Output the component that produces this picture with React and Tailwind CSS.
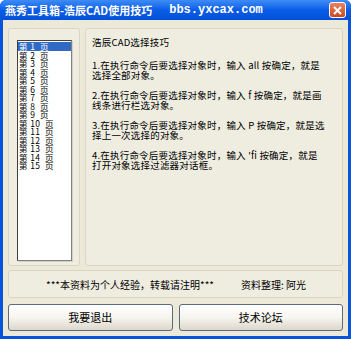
import React, { useState } from "react";

const cjk = "font-['Noto_Sans_CJK_SC',sans-serif]";

const pages = Array.from({ length: 15 }, (_, i) => i + 1);

const tips = [
  ["1.在执行命令后要选择对象时，输入 all 按确定，就是", "选择全部对象。"],
  ["2.在执行命令后要选择对象时，输入 f 按确定，就是画", "线条进行栏选对象。"],
  ["3.在执行命令后要选择对象时，输入 P 按确定，就是选", "择上一次选择的对象。"],
  ["4.在执行命令后要选择对象时，输入 'fi 按确定，就是", "打开对象选择过滤器对话框。"],
];

export default function App() {
  const [page, setPage] = useState(1);

  return (
    <div className="w-[351px] h-[339px] flex flex-col bg-[#0855DD] rounded-t-[6px] overflow-hidden">
      {/* title bar */}
      <div className="h-[22px] flex items-center px-[5px] bg-gradient-to-b from-[#3D8CF5] via-[#0A5CE8] to-[#0550D8]">
        <span className={`${cjk} text-white text-[11px] font-bold`}>
          燕秀工具箱-浩辰CAD使用技巧
        </span>
        <span className="ml-[17px] font-['Liberation_Mono',monospace] text-white text-[12px] font-bold">
          bbs.yxcax.com
        </span>
        <div className="ml-auto w-[17px] h-[16px] rounded-[3px] border border-white bg-gradient-to-b from-[#E9835F] to-[#C9471E] flex items-center justify-center">
          <svg width="9" height="9" viewBox="0 0 9 9">
            <path d="M1 1L8 8M8 1L1 8" stroke="white" strokeWidth="2" />
          </svg>
        </div>
      </div>

      {/* body */}
      <div className="flex-1 mx-[3px] mb-[3px] bg-[#ECE9D8] px-[5px] pt-[8px] pb-[5px] flex flex-col">
        <div className="flex gap-[5px] h-[238px]">
          {/* list panel */}
          <div className="w-[72px] rounded-[3px] border border-[#D8D5C4] bg-[#EFEDE0] pt-[11px] pb-[4px] pl-[8px] pr-[7px] flex">
            <div className="flex-1 bg-white border border-t-[#404040] border-l-[#404040] border-r-[#808080] border-b-[#808080] shadow-[1px_1px_0_#D4D0C8] pt-[1px]">
              {pages.map((n) => (
                <div
                  key={n}
                  onClick={() => setPage(n)}
                  className={`${cjk} text-[8.5px] leading-[8.5px] h-[8.5px] pl-[1px] tracking-[0.4px] whitespace-pre ${
                    page === n ? "bg-[#316AC5] text-white" : "text-black"
                  }`}
                >
                  {`第 ${n}  页`}
                </div>
              ))}
            </div>
          </div>

          {/* text panel */}
          <div className={`${cjk} flex-1 rounded-[3px] border border-[#D8D5C4] bg-[#EFEDE0] pl-[6px] pt-[8px] text-[9.5px] leading-[10px] tracking-[0.2px] text-black`}>
            <div className="mb-[13px]">浩辰CAD选择技巧</div>
            {tips.map(([a, b], i) => (
              <div key={i} className="mb-[10px]">
                <div className="whitespace-pre">{a}</div>
                <div>{b}</div>
              </div>
            ))}
          </div>
        </div>

        {/* footer note */}
        <div className={`${cjk} mt-[4px] h-[28px] rounded-[3px] border border-[#D8D5C4] bg-[#EFEDE0] flex items-center text-[10px] text-black`}>
          <span className="ml-[37px]">***本资料为个人经验，转载请注明***</span>
          <span className="ml-[27px]">资料整理: 阿光</span>
        </div>

        {/* buttons */}
        <div className="mt-[6px] flex gap-[6px] h-[27px]">
          {["我要退出", "技术论坛"].map((t) => (
            <button
              key={t}
              className={`${cjk} flex-1 rounded-[3px] border border-[#5A6A80] bg-gradient-to-b from-white via-[#F6F5EF] to-[#DCD7CB] text-[11px] text-black`}
            >
              {t}
            </button>
          ))}
        </div>
      </div>
    </div>
  );
}
